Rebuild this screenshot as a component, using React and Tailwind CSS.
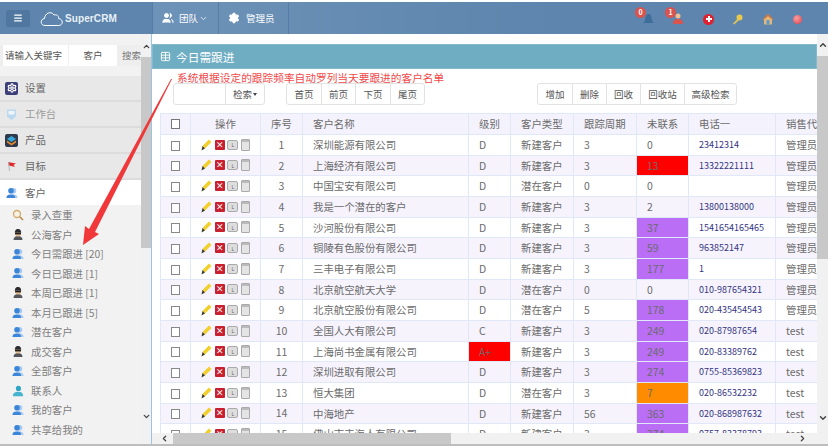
import React from 'react';
import { ChevronUp, ChevronDown, ChevronLeft, ChevronRight, Menu, Users, Settings, Table } from 'lucide-react';

const FONT = '"Noto Sans CJK SC", "Noto Sans", sans-serif';

const rows = [
  ['深圳能源有限公司', 'D', '新建客户', '3', '0', '23412314', '管理员'],
  ['上海经济有限公司', 'D', '新建客户', '3', '13', '13322221111', '管理员'],
  ['中国宝安有限公司', 'D', '潜在客户', '0', '0', '', '管理员'],
  ['我是一个潜在的客户', 'D', '新建客户', '3', '2', '13800138000', '管理员'],
  ['沙河股份有限公司', 'D', '新建客户', '3', '37', '1541654165465', '管理员'],
  ['铜陵有色股份有限公司', 'D', '新建客户', '3', '59', '963852147', '管理员'],
  ['三丰电子有限公司', 'D', '新建客户', '3', '177', '1', '管理员'],
  ['北京航空航天大学', 'D', '潜在客户', '0', '0', '010-987654321', '管理员'],
  ['北京航空股份有限公司', 'D', '潜在客户', '5', '178', '020-435454543', '管理员'],
  ['全国人大有限公司', 'C', '新建客户', '3', '249', '020-87987654', 'test'],
  ['上海尚书金属有限公司', 'A+', '新建客户', '3', '249', '020-83389762', 'test'],
  ['深圳进取有限公司', 'D', '新建客户', '3', '274', '0755-85369823', 'test'],
  ['恒大集团', 'D', '潜在客户', '3', '7', '020-86532232', 'test'],
  ['中海地产', 'D', '新建客户', '56', '363', '020-868987632', 'test'],
  ['佛山市丰海人有限公司', 'D', '新建客户', '3', '374', '0757-83378793', 'test'],
];

const subItems = [
  ['search', '录入查重'],
  ['spy', '公海客户'],
  ['person', '今日需跟进 [20]'],
  ['person', '今日已跟进 [1]'],
  ['spy', '本周已跟进 [1]'],
  ['person', '本月已跟进 [5]'],
  ['person', '潜在客户'],
  ['spy', '成交客户'],
  ['person', '全部客户'],
  ['contact', '联系人'],
  ['person', '我的客户'],
  ['person', '共享给我的'],
  ['person', '我的上传'],
];

const PersonIcon = () => (
  <svg width="12" height="12" viewBox="0 0 12 12">
    <circle cx="7.5" cy="3.8" r="2.8" fill="#a9c9ee" />
    <path d="M4 11c0-3 1.5-3.5 3.5-3.5S11.500 8 11.500 11z" fill="#a9c9ee" />
    <circle cx="5" cy="3.800" r="2.800" fill="#3b86d8" />
    <path d="M0.500 11c0-3 2-3.500 4.500-3.500S9 8 9 11z" fill="#3b86d8" />
  </svg>
);

const SpyIcon = () => (
  <svg width="12" height="13" viewBox="0 0 12 13">
    <path d="M1.500 12c0-3 2-4 4.500-4s4.500 1 4.500 4z" fill="#55565c" />
    <circle cx="6" cy="5.500" r="3" fill="#e9bf8d" />
    <path d="M2.800 4.800C3 1.500 4.500 1 6 1s3 .5 3.200 3.800z" fill="#2c2c30" />
    <rect x="3" y="5" width="6" height="1.400" fill="#222" />
  </svg>
);

const SearchIcon = () => (
  <svg width="12" height="12" viewBox="0 0 12 12" fill="none">
    <circle cx="5" cy="5" r="3.500" stroke="#d2a868" strokeWidth="1.300" fill="#f7f2e6" />
    <path d="M7.800 7.800l3.200 3.200" stroke="#b98a45" strokeWidth="1.600" />
  </svg>
);

const ContactIcon = () => (
  <svg width="14" height="14" viewBox="0 0 14 14">
    <circle cx="7.500" cy="4" r="3" fill="#2fa5c4" />
    <path d="M1 13c0-3.500 3-5 6.500-5S13 9.500 13 13z" fill="#45b4cf" />
  </svg>
);

const SubIcon = ({ type }) => {
  if (type === 'search') return <SearchIcon />;
  if (type === 'spy') return <SpyIcon />;
  if (type === 'contact') return <ContactIcon />;
  return <PersonIcon />;
};

const SettingTile = () => (
  <span className="flex h-[13px] w-[13px] items-center justify-center rounded-[2px] bg-[#3d3f78]">
    <Settings className="h-[10px] w-[10px] text-white" strokeWidth={3} />
  </span>
);

const DeskIcon = () => (
  <svg width="13" height="13" viewBox="0 0 13 13">
    <path d="M2 1.500h9v7L6.500 12 2 8.500z" fill="#bcd8ee" />
    <rect x="3.500" y="3" width="6" height="3.500" fill="#eef6fb" />
  </svg>
);

const ProductTile = () => (
  <svg width="13" height="13" viewBox="0 0 13 13">
    <rect width="13" height="13" rx="2" fill="#2f3b4c" />
    <path d="M6.500 2L11 5 6.500 8 2 5z" fill="#37a6d9" />
    <path d="M2 6.500l4.500 3 4.500-3v2l-4.500 3-4.500-3z" fill="#e58b2e" />
  </svg>
);

const FlagIcon = () => (
  <svg width="12" height="12" viewBox="0 0 12 12">
    <path d="M2 2l8 1.500L7.500 5 9 7 3 5.500z" fill="#e02a2a" />
    <path d="M2.500 2l1 9" stroke="#9ab" strokeWidth="0.800" />
  </svg>
);

const MenuItem = ({ icon, label, muted }) => (
  <div className={`flex h-[26px] shrink-0 items-center gap-[7px] border-b-2 border-[#dcdcdc] bg-[#e8e8e8] pl-[5px] text-[10.4px] ${muted ? 'text-[#999]' : 'text-[#666]'}`}>
    <span className="flex w-[13px] justify-center">{icon}</span>
    {label}
  </div>
);

const Sidebar = () => (
  <div className="flex w-[152px] shrink-0 border-r border-[#9cc4dc] bg-[#f2f2f2]">
    <div className="flex min-w-0 flex-1 flex-col overflow-hidden">
      <div className="h-[42px] shrink-0 pt-[11px]">
        <div className="flex h-[21px] items-center bg-[#eeeeee] pl-[3px] text-[9.5px] text-[#555]">
          <div className="flex h-[21px] w-[65px] items-center bg-white pl-[2px] whitespace-nowrap">请输入关键字</div>
          <div className="ml-[1px] flex h-[21px] w-[48px] items-center justify-center bg-white">客户</div>
          <span className="ml-[5px] text-[#777]">搜索</span>
        </div>
      </div>
      <MenuItem icon={<SettingTile />} label="设置" />
      <MenuItem icon={<DeskIcon />} label="工作台" muted />
      <MenuItem icon={<ProductTile />} label="产品" />
      <MenuItem icon={<FlagIcon />} label="目标" />
      <div className="flex h-[25px] shrink-0 items-center gap-[7px] bg-white pl-[5px] text-[10.4px] text-[#666]">
        <span className="flex w-[13px] justify-center"><PersonIcon /></span>
        客户
      </div>
      <div>
        {subItems.map(([icon, label]) => (
          <div key={label} className="flex h-[19.55px] items-center gap-[7px] pl-[12px] text-[10.4px] text-[#808080] whitespace-nowrap">
            <span className="flex w-[12px] justify-center"><SubIcon type={icon} /></span>
            {label}
          </div>
        ))}
      </div>
    </div>
    <div className="flex w-[10px] shrink-0 flex-col bg-[#f1f1f1]">
      <div className="flex h-[23px] items-end justify-center pb-[6px]">
        <ChevronUp className="h-[9px] w-[9px] text-[#444]" strokeWidth={3.500} />
      </div>
      <div className="h-[191px] bg-[#c8c8c8]" />
      <div className="flex-1" />
      <div className="flex h-[32px] items-start justify-center">
        <ChevronDown className="h-[9px] w-[9px] text-[#444]" strokeWidth={3.500} />
      </div>
    </div>
  </div>
);

const BtnGroup = ({ items, widths }) => (
  <div className="flex h-[22px] rounded-[3px] border border-[#e2e2e2] bg-white text-[9.5px] text-[#555]">
    {items.map((item, i) => (
      <div key={item} className={`flex items-center justify-center ${widths[i]} ${i ? 'border-l border-[#e2e2e2]' : ''}`}>
        {item}
        {item === '检索' ? <span className="ml-px h-0 w-0 border-x-[2.5px] border-t-[3px] border-x-transparent border-t-[#444]" /> : null}
      </div>
    ))}
  </div>
);

const RowIcons = () => (
  <div className="flex items-center justify-center gap-[2.5px]">
    <svg width="11" height="12" viewBox="0 0 11 12">
      <path d="M1.500 7L8 .5 10.500 3 4 9.500z" fill="#f2cf2b" />
      <path d="M0.500 11.500L1.500 7 4 9.500z" fill="#3a3a2a" />
    </svg>
    <span className="flex h-[10px] w-[10px] items-center justify-center rounded-[1px] bg-[#c9202f] text-[8px] leading-none font-bold text-white">×</span>
    <span className="flex h-[10px] w-[11px] items-center justify-center rounded-[2px] border border-[#aaa] bg-[#ddd] text-[5px] leading-none text-[#666]">L</span>
    <span className="h-[12px] w-[9px] rounded-[1px] border border-[#aaa] bg-[#e4e4e4] shadow-[inset_0_2px_0_#bbb]" />
  </div>
);

const headers = ['', '操作', '序号', '客户名称', '级别', '客户类型', '跟踪周期', '未联系', '电话一', '销售代'];

const CELL = 'border border-[#e0e7f6] px-0 whitespace-nowrap overflow-hidden';

const unreadBg = (value, i) => {
  const n = Number(value);
  if (i === 12) return 'bg-[#ff8c00]';
  if (i === 1) return 'bg-[#ff0000]';
  if (n >= 30) return 'bg-[#b96ef5]';
  return '';
};

const DataTable = () => (
  <table className="w-[680px] table-fixed border-collapse text-[10.4px] text-[#6b6b6b]">
    <colgroup>
      <col className="w-[30px]" />
      <col className="w-[70px]" />
      <col className="w-[42px]" />
      <col className="w-[166px]" />
      <col className="w-[42px]" />
      <col className="w-[63px]" />
      <col className="w-[63px]" />
      <col className="w-[52px]" />
      <col className="w-[87px]" />
      <col className="w-[65px]" />
    </colgroup>
    <thead>
      <tr className="h-[21px] bg-[#f4f2fc]">
        {headers.map((h, i) => (
          <th key={i} className={`${CELL} font-normal ${i === 1 || i === 2 || i === 0 ? 'text-center' : 'pl-[10px] text-left'}`}>
            {i === 0 ? <span className="mx-auto block h-[10px] w-[9px] border border-[#777] bg-white" /> : h}
          </th>
        ))}
      </tr>
    </thead>
    <tbody>
      {rows.map((r, i) => (
        <tr key={i} className={`h-[20.67px] ${i % 2 ? 'bg-[#f6f3fd]' : 'bg-white'}`}>
          <td className={CELL}><span className="mx-auto mt-[2px] block h-[10px] w-[9px] border border-[#888] bg-white" /></td>
          <td className={CELL}><RowIcons /></td>
          <td className={`${CELL} text-center text-[10.5px]`}>{i + 1}</td>
          <td className={`${CELL} pl-[10px]`}>{r[0]}</td>
          <td className={`${CELL} pl-[10px] ${r[1] === 'A+' ? 'bg-[#ff0000]' : ''}`}>{r[1]}</td>
          <td className={`${CELL} pl-[10px]`}>{r[2]}</td>
          <td className={`${CELL} pl-[10px]`}>{r[3]}</td>
          <td className={`${CELL} pl-[10px] ${unreadBg(r[4], i)}`}>{r[4]}</td>
          <td className={`${CELL} pl-[10px] text-[9px] text-[#33337f]`}>{r[5]}</td>
          <td className={`${CELL} pl-[10px]`}>{r[6]}</td>
        </tr>
      ))}
    </tbody>
  </table>
);

const Badge = ({ n }) => (
  <span className="absolute -top-[6px] -left-[7px] flex h-[11px] w-[11px] items-center justify-center rounded-full bg-[#d9534f] text-[7px] font-bold text-white">{n}</span>
);

const Header = () => (
  <div className="flex h-[32px] shrink-0 items-center bg-[#5d85ad] text-white">
    <div className="flex w-[152px] shrink-0 items-center">
      <div className="ml-[6px] flex h-[17px] w-[24px] items-center justify-center rounded-[2px] bg-[#4f779f]">
        <Menu className="h-[10px] w-[10px]" strokeWidth={3} />
      </div>
      <svg className="ml-[10px]" width="24" height="17" viewBox="0 0 24 17" fill="none">
        <path d="M5 15.500c-5 0-5-6.500-.500-7C5 3 11 .500 14 5c4-1 5 2 4.500 3.500 5 .500 5 7 0 7z" stroke="#fff" strokeWidth="1" />
      </svg>
      <span className="ml-px text-[10px] font-bold tracking-[0.1px] text-[#e8f0f7]" style={{ fontFamily: '"Liberation Sans", sans-serif' }}>SuperCRM</span>
    </div>
    <div className="flex h-full flex-1 bg-[linear-gradient(90deg,#6e93b8,#6289b0_40%,#5d85ad_60%)]">
      <div className="flex h-full w-[67px] items-center border-x border-[#557da5] pl-[9px] text-[9.5px]">
        <Users className="h-[12px] w-[12px]" fill="#fff" />
        <span className="ml-[5px]">团队</span>
        <ChevronDown className="ml-[1px] h-[9px] w-[9px]" />
      </div>
      <div className="flex h-full w-[70px] items-center border-r border-[#557da5] pl-[9px] text-[9.5px]">
        <Settings className="h-[12px] w-[12px]" fill="#fff" />
        <span className="ml-[6px]">管理员</span>
      </div>
      <div className="flex-1" />
      <div className="flex items-center pt-[2px]">
        <div className="relative mr-[18px] h-[12px] w-[12px]">
          <Badge n="0" />
          <svg width="13" height="12" viewBox="0 0 13 12"><path d="M1 10c2-1 2-3 2.500-5.500C4 2 5 1 6.500 1S9 2 9.500 4.500C10 7 10 9 12 10z" fill="#3f6d9a" /></svg>
        </div>
        <div className="relative mr-[19px] h-[12px] w-[12px]">
          <Badge n="1" />
          <svg width="12" height="11" viewBox="0 0 12 11"><circle cx="6" cy="3" r="2.500" fill="#f0c090" /><path d="M1 11c0-4 2-5 5-5s5 1 5 5z" fill="#d9534f" /></svg>
        </div>
        <span className="relative mr-[18px] flex h-[11px] w-[11px] items-center justify-center rounded-full bg-[#e0202f]">
          <span className="absolute h-[6px] w-[2px] bg-white" />
          <span className="absolute h-[2px] w-[6px] bg-white" />
        </span>
        <svg className="mr-[19px]" width="11" height="11" viewBox="0 0 11 11">
          <circle cx="7.500" cy="3.500" r="3" fill="#e9c84e" />
          <path d="M5.500 5L1 9.500l1.200 1L7 6z" fill="#e9c84e" />
        </svg>
        <svg className="mr-[19px]" width="12" height="12" viewBox="0 0 12 12">
          <path d="M6 1L0.500 6.500H2V11.500H10V6.500H11.500z" fill="#e6b877" />
          <path d="M6 1L0.500 6.500H2L6 3l4 3.500h1.500z" fill="#c86a3c" />
          <rect x="4.500" y="7" width="3" height="4.500" fill="#5b9bd1" />
        </svg>
        <span className="mr-[26px] h-[9px] w-[9px] rounded-full bg-[radial-gradient(circle_at_40%_35%,#f6a0a0,#e23a48)]" />
      </div>
    </div>
  </div>
);

// the red hand-drawn note lying over the page
const Annotation = () => (
  <>
    <div className="absolute top-[70px] left-[177px] text-[10.7px] whitespace-nowrap text-[#f2494a]">
      系统根据设定的跟踪频率自动罗列当天要跟进的客户名单
    </div>
    <svg className="pointer-events-none absolute top-0 left-0" width="828" height="446">
      <path d="M172 79L95 232 99 234 83 245 85 226 89 229 171 79z" fill="#f0383a" />
    </svg>
  </>
);

export default function App() {
  return (
    <div className="relative flex h-[446px] w-[828px] flex-col overflow-hidden bg-white" style={{ fontFamily: FONT }}>
      <div className="h-[2px] shrink-0 bg-white" />
      <Header />
      <div className="flex min-h-0 flex-1">
        <Sidebar />
        <div className="flex min-w-0 flex-1 flex-col">
          <div className="flex min-h-0 flex-1">
            <div className="flex min-w-0 flex-1 flex-col pt-[10px]">
              <div className="flex h-[25px] shrink-0 items-center gap-[5px] border border-[#84bacd] bg-[#6fadc3] pl-[7px] text-[11.7px] text-white">
                <Table className="h-[11px] w-[11px]" />
                今日需跟进
              </div>
              <div className="flex h-[44px] shrink-0 items-start pt-[14px] pl-[21px]">
                <BtnGroup items={['', '检索']} widths={['w-[51px]', 'w-[39px]']} />
                <div className="ml-[21px]">
                  <BtnGroup items={['首页', '前页', '下页', '尾页']} widths={['w-[34px]', 'w-[34px]', 'w-[35px]', 'w-[34px]']} />
                </div>
                <div className="ml-[112px]">
                  <BtnGroup items={['增加', '删除', '回收', '回收站', '高级检索']} widths={['w-[34px]', 'w-[34px]', 'w-[34px]', 'w-[44px]', 'w-[52px]']} />
                </div>
              </div>
              <div className="min-h-0 flex-1 overflow-hidden pl-[8px]">
                <DataTable />
              </div>
            </div>
            <div className="flex w-[11px] shrink-0 flex-col bg-[#f1f1f1]">
              <div className="flex h-[22px] items-center justify-center">
                <ChevronUp className="h-[10px] w-[10px] text-[#444]" strokeWidth={3.500} />
              </div>
              <div className="h-[203px] bg-[#c8c8c8]" />
              <div className="flex flex-1 items-end justify-center pb-[10px]">
                <ChevronDown className="h-[10px] w-[10px] text-[#444]" strokeWidth={3.500} />
              </div>
            </div>
          </div>
          <div className="flex h-[11px] shrink-0 items-center bg-[#f1f1f1]">
            <ChevronLeft className="ml-[8px] h-[9px] w-[9px] shrink-0 text-[#444]" strokeWidth={3.500} />
            <div className="ml-[4px] h-full w-[278px] bg-[#c8c8c8]" />
            <div className="flex-1" />
            <ChevronRight className="mr-[21px] h-[9px] w-[9px] shrink-0 text-[#444]" strokeWidth={3.500} />
          </div>
        </div>
      </div>
      <div className="h-[2px] shrink-0 bg-[#bdbdbd]" />
      <Annotation />
    </div>
  );
}
